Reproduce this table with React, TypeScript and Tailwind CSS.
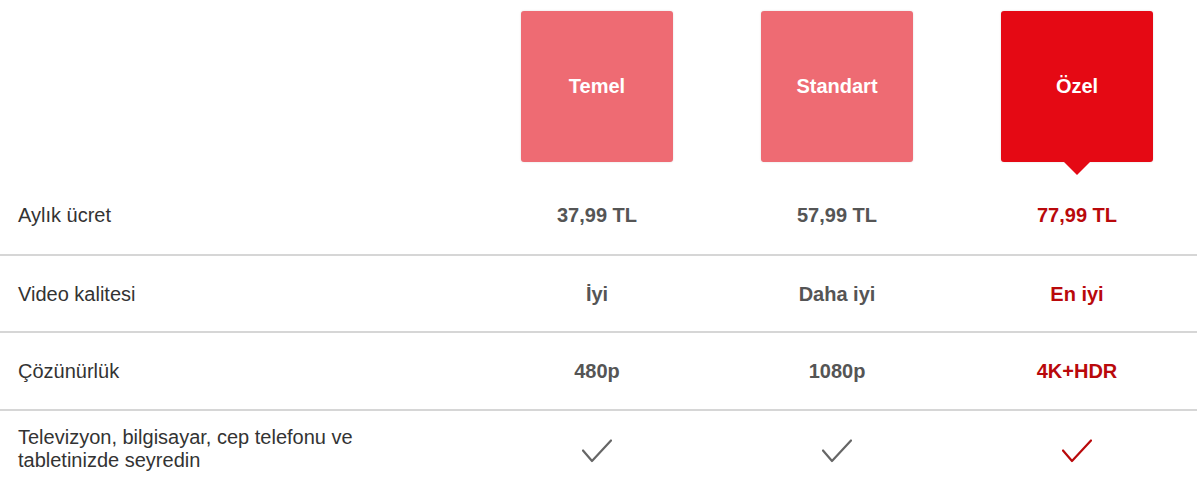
import { Fragment } from "react";

const plans = [
  { name: "Temel", active: false },
  { name: "Standart", active: false },
  { name: "Özel", active: true },
];

const rows: { label: string; values: string[]; h: string }[] = [
  { label: "Aylık ücret", values: ["37,99 TL", "57,99 TL", "77,99 TL"], h: "h-[81px]" },
  { label: "Video kalitesi", values: ["İyi", "Daha iyi", "En iyi"], h: "h-[77px]" },
  { label: "Çözünürlük", values: ["480p", "1080p", "4K+HDR"], h: "h-[78px]" },
];

function Check({ red }: { red: boolean }) {
  return (
    <svg width="30" height="24" viewBox="0 0 30 24" fill="none">
      <path
        d="M1 11.5 L10 22 L29 1.5"
        stroke={red ? "#b9090b" : "#666"}
        strokeWidth="2.2"
        strokeLinecap="round"
        strokeLinejoin="round"
      />
    </svg>
  );
}

export default function App() {
  return (
    <main className="w-[1200px] h-[495px] bg-white overflow-hidden font-['Liberation_Sans',Arial,sans-serif]">
      <div className="grid grid-cols-[477px_240px_240px_240px] w-[1197px]">
        {/* plan header */}
        <div className="h-[175px]" />
        {plans.map((p) => (
          <div key={p.name} className="flex justify-center h-[175px]">
            <div
              className={
                "relative mt-[11px] w-[152px] h-[151px] rounded-[3px] flex items-center justify-center pb-[2px] shadow-[0_0_2px_rgba(0,0,0,0.15)] " +
                (p.active ? "bg-[#e50914]" : "bg-[#ee6b73]")
              }
            >
              <span className="text-white text-[20px] font-bold">{p.name}</span>
              {p.active && (
                <div className="absolute top-full left-1/2 -translate-x-1/2 w-0 h-0 border-l-[13px] border-r-[13px] border-t-[13px] border-l-transparent border-r-transparent border-t-[#e50914]" />
              )}
            </div>
          </div>
        ))}

        {rows.map((r) => (
          <Fragment key={r.label}>
            <div className={"flex items-center pl-[18px] text-[20px] text-[#333] border-b-2 border-[#d6d6d6] " + r.h}>
              {r.label}
            </div>
            {r.values.map((v, j) => (
              <div
                key={v}
                className={
                  "flex items-center justify-center text-[20px] font-bold border-b-2 border-[#d6d6d6] " +
                  (j === 2 ? "text-[#b9090b] " : "text-[#555] ") +
                  r.h
                }
              >
                {v}
              </div>
            ))}
          </Fragment>
        ))}

        {/* devices row */}
        <div className="flex items-center pl-[18px] h-[76px] text-[20px] leading-[23px] text-[#333]">
          <span className="max-w-[360px]">
            Televizyon, bilgisayar, cep telefonu ve tabletinizde seyredin
          </span>
        </div>
        {plans.map((p) => (
          <div key={p.name} className="flex items-center justify-center h-[76px] pt-[4px]">
            <Check red={p.active} />
          </div>
        ))}
      </div>
    </main>
  );
}
